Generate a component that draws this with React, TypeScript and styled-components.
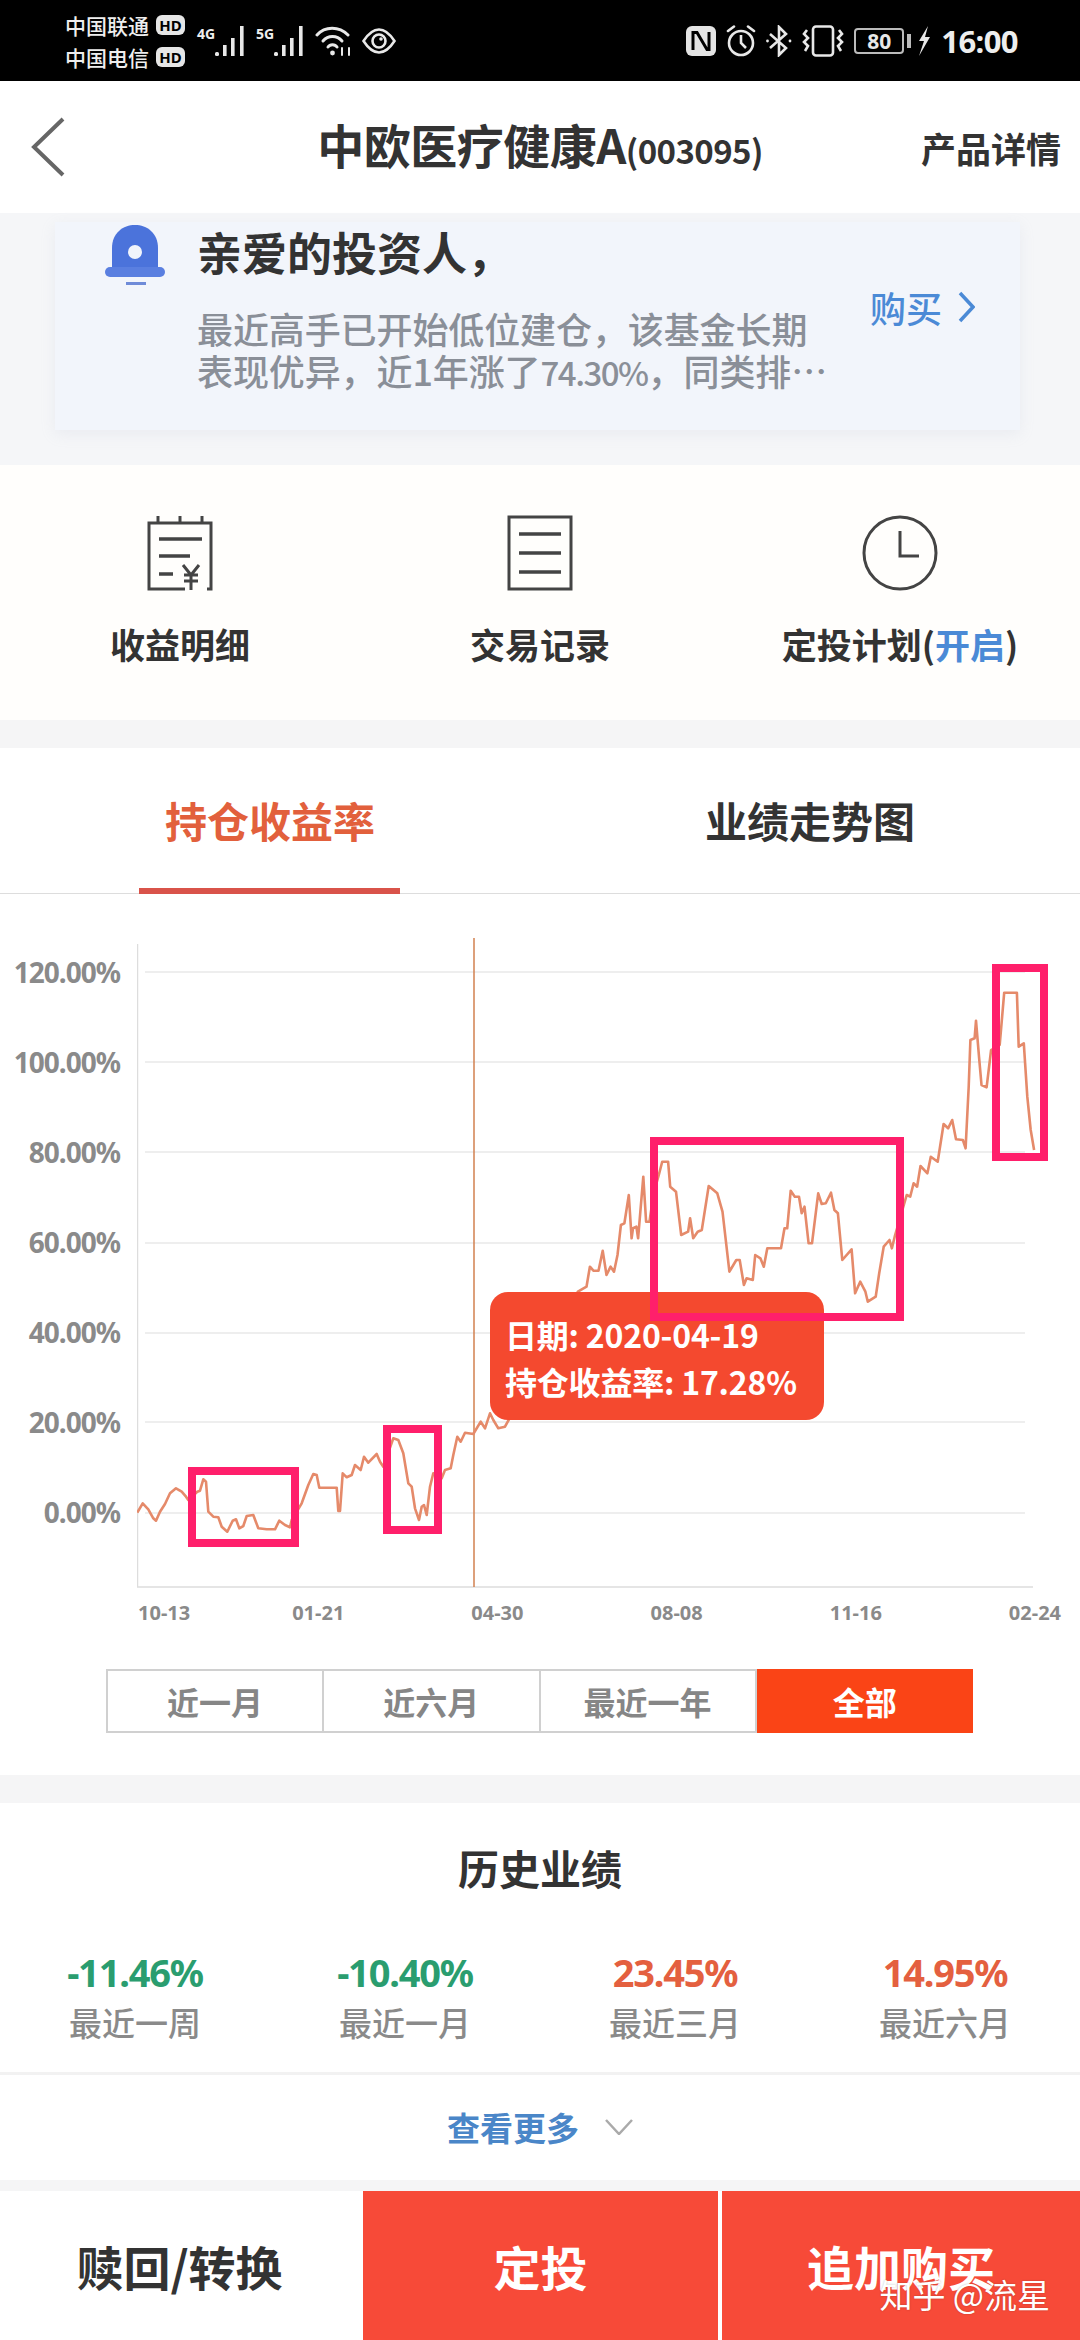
import React from "react";
import styled, { createGlobalStyle } from "styled-components";

const Global = createGlobalStyle`
  html, body { margin: 0; padding: 0; background: #fff; }
  body { font-family: "Noto Sans CJK SC", "Noto Sans", sans-serif; }
  * { box-sizing: border-box; }
`;

const Page = styled.div`
  width: 1080px;
  height: 2340px;
  overflow: hidden;
  display: flex;
  flex-direction: column;
  background: #fff;
  color: #333;
`;

/* ---------- status bar ---------- */
const StatusBar = styled.div`
  height: 81px;
  flex: none;
  background: #000;
  color: #eee;
  display: flex;
  align-items: center;
  justify-content: space-between;
  padding: 0 62px 0 65px;
`;
const StatusGroup = styled.div`
  display: flex;
  align-items: center;
  gap: ${(p: { $gap: number }) => p.$gap}px;
`;
const Carriers = styled.div`
  display: flex;
  flex-direction: column;
  gap: 8px;
  margin-right: 3px;
`;
const Carrier = styled.div`
  display: flex;
  align-items: center;
  gap: 7px;
  font-size: 21px;
  line-height: 24px;
  font-weight: 500;
`;
const HdBadge = styled.span`
  width: 29px;
  height: 20px;
  border-radius: 6px;
  background: #e6e6e6;
  color: #000;
  font: 700 15px/20px "Noto Sans", sans-serif;
  text-align: center;
`;
const Network = styled.div`
  display: flex;
  align-items: flex-end;
  height: 30px;
`;
const NetTag = styled.span`
  font: 700 14px/14px "Noto Sans", sans-serif;
  align-self: flex-start;
  margin-top: 1px;
  width: 18px;
`;
const BatteryBox = styled.div`
  width: 50px;
  height: 26px;
  border: 2px solid #bbb;
  border-radius: 4px;
  font: 700 21px/22px "Noto Sans", sans-serif;
  text-align: center;
  color: #e8e8e8;
`;
const BatteryCap = styled.div`
  width: 4px;
  height: 14px;
  background: #bbb;
  margin-left: 3px;
  margin-right: 6px;
`;
const Clock = styled.div`
  font: 700 31px/36px "Noto Sans", sans-serif;
  letter-spacing: -0.6px;
  margin-left: 0;
`;

const Signal = () => (
  <svg width="32" height="30" viewBox="0 0 32 30" fill="#e8e8e8">
    <rect x="0" y="26" width="4" height="4" rx="1.5" />
    <rect x="8" y="19" width="3.6" height="11" />
    <rect x="16" y="12" width="3.6" height="18" />
    <rect x="25" y="0" width="3.6" height="30" />
  </svg>
);
const Wifi = () => (
  <svg width="38" height="30" viewBox="0 0 38 30" fill="none" stroke="#e8e8e8" strokeWidth="3" strokeLinecap="round">
    <path d="M2 9 C10 0 24 0 33 9" />
    <path d="M8 15 C13 9 22 9 27 15" />
    <path d="M13 21 C15 18 20 18 22 21" />
    <circle cx="17.5" cy="27" r="2.4" fill="#e8e8e8" stroke="none" />
    <path d="M27 29 V22 M34 29 V22" strokeWidth="2" />
  </svg>
);
const Eye = () => (
  <svg width="34" height="26" viewBox="0 0 34 26" fill="none" stroke="#e8e8e8" strokeWidth="2.6">
    <path d="M1.5 13 C8 3 13 1.5 17 1.5 C21 1.5 26 3 32.5 13 C26 23 21 24.5 17 24.5 C13 24.5 8 23 1.5 13 Z" />
    <circle cx="17" cy="13" r="6.5" />
    <circle cx="19" cy="11" r="1.8" fill="#e8e8e8" stroke="none" />
  </svg>
);
const Nfc = () => (
  <svg width="30" height="30" viewBox="0 0 30 30">
    <rect x="0" y="0" width="30" height="30" rx="6" fill="#e4e4e4" />
    <path d="M7 24 V6.5 H11 L21 23.5 H23 V6" fill="none" stroke="#000" strokeWidth="3" />
  </svg>
);
const Alarm = () => (
  <svg width="30" height="32" viewBox="0 0 30 32" fill="none" stroke="#e8e8e8" strokeWidth="2.6">
    <circle cx="15" cy="18" r="12" />
    <path d="M15 10 V18 L20 23" />
    <path d="M2 6 L8 1.5 M28 6 L22 1.5" strokeLinecap="round" />
  </svg>
);
const Bluetooth = () => (
  <svg width="26" height="32" viewBox="0 0 26 32" fill="none" stroke="#e8e8e8" strokeWidth="2.6">
    <path d="M4 9 L20 23 L13 30 V2 L20 9 L4 23" />
    <circle cx="1.5" cy="16" r="1.4" fill="#e8e8e8" stroke="none" />
    <circle cx="24" cy="16" r="1.4" fill="#e8e8e8" stroke="none" />
  </svg>
);
const Vibrate = () => (
  <svg width="42" height="32" viewBox="0 0 42 32" fill="none" stroke="#e8e8e8" strokeWidth="2.6">
    <rect x="11" y="1.5" width="20" height="29" rx="3" />
    <path d="M5 5 L2 9 L6 13 L2 17 L6 21 L3 26" />
    <path d="M37 5 L40 9 L36 13 L40 17 L36 21 L39 26" />
  </svg>
);
const Bolt = () => (
  <svg width="14" height="30" viewBox="0 0 14 30" fill="#e8e8e8">
    <path d="M11 0 L2 15 H7 L2 30 L13 11 H8 Z" />
  </svg>
);

/* ---------- nav ---------- */
const Nav = styled.div`
  height: 132px;
  flex: none;
  display: grid;
  grid-template-columns: 1fr auto 1fr;
  align-items: center;
  background: #fff;
`;
const Back = styled.div`
  padding-left: 30px;
  display: flex;
`;
const Title = styled.div`
  font-size: 47px;
  line-height: 60px;
  font-weight: 700;
  color: #333;
  white-space: nowrap;
  display: flex;
  align-items: baseline;
  letter-spacing: -0.5px;
`;
const TitleCode = styled.span`
  font-size: 33px;
  letter-spacing: -0.6px;
`;
const NavLink = styled.div`
  justify-self: end;
  padding-right: 19px;
  font-size: 35px;
  font-weight: 700;
  color: #333;
`;

/* ---------- banner ---------- */
const Banner = styled.div`
  height: 252px;
  flex: none;
  background: #f5f6f8;
  padding: 9px 60px 35px 55px;
`;
const Card = styled.div`
  height: 208px;
  background: #f2f5fb;
  box-shadow: 0 4px 14px rgba(170, 178, 195, 0.14);
  display: flex;
  padding-left: 50px;
  padding-right: 45px;
`;
const BellBox = styled.div`
  width: 60px;
  margin-right: 32px;
  padding-top: 3px;
  flex: none;
`;
const CardText = styled.div`
  flex: 1;
  min-width: 0;
`;
const CardTitle = styled.div`
  font-size: 45px;
  line-height: 60px;
  font-weight: 700;
  color: #333;
`;
const CardDesc = styled.div`
  margin-top: 25px;
  font-size: 36px;
  line-height: 42px;
  font-weight: 500;
  color: #8a8f98;
  white-space: nowrap;
  letter-spacing: -0.1px;
`;
const TightNumber = styled.span`
  font-size: 33px;
  letter-spacing: -1.5px;
`;
const BuyLink = styled.div`
  flex: none;
  margin-top: 60px;
  height: 50px;
  display: flex;
  align-items: center;
  gap: 16px;
  font-size: 36px;
  font-weight: 500;
  color: #4b8ad6;
`;

/* ---------- actions ---------- */
const Actions = styled.div`
  height: 255px;
  flex: none;
  background: #fffefc;
  display: grid;
  grid-template-columns: repeat(3, 1fr);
  padding-top: 50px;
`;
const Action = styled.div`
  display: flex;
  flex-direction: column;
  align-items: center;
  gap: 28px;
`;
const ActionIcon = styled.div`
  height: 76px;
  display: flex;
`;
const ActionLabel = styled.div`
  font-size: 35px;
  line-height: 50px;
  font-weight: 700;
  color: #333;
  white-space: nowrap;
`;
const Blue = styled.span`
  color: #4b8ad6;
`;
const Gap = styled.div`
  height: ${(p: { $h: number }) => p.$h}px;
  flex: none;
  background: #f5f5f6;
`;

/* ---------- tabs ---------- */
const Tabs = styled.div`
  height: 146px;
  flex: none;
  display: grid;
  grid-template-columns: 1fr 1fr;
  border-bottom: 1px solid #ddd;
`;
const Tab = styled.div<{ $active?: boolean }>`
  position: relative;
  display: flex;
  align-items: center;
  justify-content: center;
  padding-bottom: 2px;
  font-size: 42px;
  font-weight: 700;
  color: ${(p) => (p.$active ? "#e2603c" : "#333")};
  ${(p) =>
    p.$active &&
    `&::after {
      content: "";
      position: absolute;
      left: 139px;
      bottom: -1px;
      width: 261px;
      height: 6px;
      background: #d9534a;
    }`}
`;

/* ---------- chart ---------- */
const ChartSection = styled.div`
  position: relative;
  height: 881px;
  flex: none;
  padding-top: 33px;
  background: #fff;
`;
const ChartRow = styled.div`
  display: flex;
  height: 663px;
`;
const YAxis = styled.div`
  width: 137px;
  flex: none;
  display: flex;
  flex-direction: column;
  padding-right: 17px;
`;
const YLabel = styled.div`
  height: 90px;
  flex: none;
  display: flex;
  align-items: center;
  justify-content: flex-end;
  font: 700 28px/1 "Noto Sans", sans-serif;
  letter-spacing: -1px;
  color: #8a8a8a;
`;
const Plot = styled.svg`
  flex: none;
  display: block;
`;
const XAxis = styled.div`
  height: 46px;
  display: flex;
  align-items: center;
  gap: 127px;
  padding-left: 138px;
`;
const XLabel = styled.div<{ $first?: boolean }>`
  font: 700 20px/1 "Noto Sans", sans-serif;
  color: #8a8a8a;
  margin-right: ${(p) => (p.$first ? "-25px" : "0")};
`;
const Segments = styled.div`
  margin: 33px 0 0 106px;
  width: 867px;
  height: 64px;
  display: grid;
  grid-template-columns: repeat(4, 1fr);
  border-top: 2px solid #d0d0d0;
  border-bottom: 2px solid #d0d0d0;
  border-left: 2px solid #d0d0d0;
`;
const Segment = styled.div<{ $active?: boolean }>`
  display: flex;
  align-items: center;
  justify-content: center;
  font-size: 32px;
  font-weight: 700;
  color: ${(p) => (p.$active ? "#fff" : "#868686")};
  background: ${(p) => (p.$active ? "#fa4416" : "transparent")};
  border-right: ${(p) => (p.$active ? "0" : "2px solid #d0d0d0")};
  margin: ${(p) => (p.$active ? "-2px 0" : "0")};
`;
const Tooltip = styled.div`
  position: absolute;
  left: 490px;
  top: 398px;
  width: 334px;
  height: 128px;
  border-radius: 18px;
  background: #f4492f;
  color: #fff;
  padding: 19px 0 0 15px;
  font-size: 32px;
  line-height: 47px;
  font-weight: 700;
  white-space: nowrap;
  letter-spacing: -0.2px;
`;
const Highlight = styled.div<{ $x: number; $y: number; $w: number; $h: number }>`
  position: absolute;
  left: ${(p) => p.$x}px;
  top: ${(p) => p.$y}px;
  width: ${(p) => p.$w}px;
  height: ${(p) => p.$h}px;
  border: 8px solid #ff1f6b;
`;

/* ---------- history ---------- */
const History = styled.div`
  height: 272px;
  flex: none;
  border-bottom: 3px solid #f2f2f2;
  padding-top: 32px;
`;
const HistoryTitle = styled.div`
  text-align: center;
  font-size: 41px;
  line-height: 64px;
  font-weight: 700;
  color: #333;
`;
const Stats = styled.div`
  margin-top: 48px;
  display: grid;
  grid-template-columns: repeat(4, 270px);
`;
const Stat = styled.div`
  display: flex;
  flex-direction: column;
  align-items: center;
  gap: 3px;
`;
const StatValue = styled.div<{ $up?: boolean }>`
  font: 700 38px/50px "Noto Sans", sans-serif;
  letter-spacing: -1.2px;
  color: ${(p) => (p.$up ? "#e4603f" : "#2a9d6f")};
`;
const StatLabel = styled.div`
  font-size: 33px;
  line-height: 44px;
  font-weight: 500;
  color: #8a8a8a;
`;
const More = styled.div`
  height: 105px;
  flex: none;
  display: flex;
  align-items: center;
  justify-content: center;
  gap: 26px;
  padding-bottom: 2px;
  font-size: 33px;
  font-weight: 700;
  color: #4a86c8;
`;

/* ---------- bottom ---------- */
const Bottom = styled.div`
  position: relative;
  height: 149px;
  flex: none;
  display: grid;
  grid-template-columns: 359px 355px 358px;
  column-gap: 4px;
  background: #fff;
`;
const BottomBtn = styled.div<{ $primary?: boolean }>`
  display: flex;
  align-items: center;
  justify-content: center;
  font-size: 47px;
  font-weight: 700;
  background: ${(p) => (p.$primary ? "#f74a38" : "#fff")};
  color: ${(p) => (p.$primary ? "#fff" : "#333")};
`;
const Watermark = styled.div`
  position: absolute;
  right: 30px;
  bottom: 21px;
  font-size: 33px;
  line-height: 50px;
  color: #fff;
  text-shadow: 0 0 2px rgba(0, 0, 0, 0.25);
  white-space: nowrap;
`;

/* ---------- data ---------- */
const A: number[][] = [
  [52,698],[68,670],[85,688],[100,715],[108,722],[120,695],[135,672],[150,640],[168,625],[185,635],[198,650],[205,660],[232,635],[240,632],[250,598],[258,605],[265,695],[280,710],[295,712],[305,740],[322,755],[338,722],[348,718],[358,745],[370,738],[380,708],[400,705],[415,745],[440,748],[465,748],[478,722],[495,735],[510,742],[515,720],[545,670],[565,615],[580,582],[590,585],[598,623],[650,623],[655,693],[660,693],[668,580],[680,592],[695,585],[705,555],[722,570],[732,530],[745,548],[770,522],[780,545],[790,560],[820,475],[835,480],[850,520],[865,610],[875,620],[885,685],[897,720],[905,680],[912,675],[920,705],[930,620],[940,580],[965,595],[975,570],[992,565],[1000,525],[1012,470],[1022,485],[1035,458],[1060,462],[1082,425],[1095,445],[1110,400],[1120,420],[1135,445],[1155,440],
];
const B: number[][] = [
  [110,1085],[135,1070],[145,1010],[155,1022],[170,1022],[182,962],[193,1035],[205,1010],[215,1025],[225,975],[235,885],[245,880],[258,795],[266,925],[270,895],[280,890],[285,925],[300,740],[308,875],[318,875],[330,790],[345,735],[355,695],[372,695],[378,770],[395,785],[410,915],[430,905],[436,865],[445,925],[458,905],[470,900],[490,768],[515,790],[530,845],[550,1025],[570,990],[580,990],[592,1065],[600,1045],[618,1050],[625,975],[640,985],[650,1010],[660,955],[700,955],[710,895],[718,895],[728,782],[740,800],[752,800],[760,850],[768,830],[780,940],[790,940],[808,790],[818,822],[830,820],[845,788],[855,840],[865,850],[878,990],[905,958],[915,1090],[930,1055],[945,1085],[952,1115],[975,1100],[985,1030],[998,950],[1015,930],[1022,955],[1030,920],[1065,795],[1075,800],[1085,760],[1095,770],[1105,708],[1125,730],[1135,680],[1155,695],[1172,582],[1185,595],[1197,570],[1208,628],[1228,630],[1236,655],[1245,470],[1250,330],[1262,325],[1266,272],[1275,380],[1282,465],[1297,472],[1310,360],[1335,345],[1348,188],[1385,188],[1390,350],[1405,340],[1415,500],[1425,600],[1435,660],
];
const ORIGIN_X = 137;
const ORIGIN_Y = 927;
const linePoints = [
  ...A.map(([x, y]) => [120 + x / 3 - ORIGIN_X, 1280 + y / 3 - ORIGIN_Y]),
  ...B.map(([x, y]) => [540 + x / 2.904 - ORIGIN_X, 930 + y / 3 - ORIGIN_Y]),
]
  .map(([x, y]) => `${x.toFixed(1)},${y.toFixed(1)}`)
  .join(" ");

const yLabels = ["120.00%", "100.00%", "80.00%", "60.00%", "40.00%", "20.00%", "0.00%"];
const gridYs = [972, 1062, 1152, 1243, 1333, 1422, 1513];
const xLabels = ["10-13", "01-21", "04-30", "08-08", "11-16", "02-24"];
const stats = [
  { value: "-11.46%", label: "最近一周", up: false },
  { value: "-10.40%", label: "最近一月", up: false },
  { value: "23.45%", label: "最近三月", up: true },
  { value: "14.95%", label: "最近六月", up: true },
];
const boxes = [
  { x: 188, y: 1467, w: 111, h: 80 },
  { x: 383, y: 1425, w: 59, h: 109 },
  { x: 650, y: 1137, w: 254, h: 184 },
  { x: 992, y: 964, w: 56, h: 197 },
];

const iconStroke = { fill: "none", stroke: "#444", strokeWidth: 3 };

export default function App() {
  return (
    <Page>
      <Global />
      <StatusBar>
        <StatusGroup $gap={9}>
          <Carriers>
            <Carrier>中国联通<HdBadge>HD</HdBadge></Carrier>
            <Carrier>中国电信<HdBadge>HD</HdBadge></Carrier>
          </Carriers>
          <Network><NetTag>4G</NetTag><Signal /></Network>
          <Network><NetTag>5G</NetTag><Signal /></Network>
          <Wifi />
          <Eye />
        </StatusGroup>
        <StatusGroup $gap={10}>
          <Nfc />
          <Alarm />
          <Bluetooth />
          <Vibrate />
          <StatusGroup $gap={0}>
            <BatteryBox>80</BatteryBox>
            <BatteryCap />
            <Bolt />
          </StatusGroup>
          <Clock>16:00</Clock>
        </StatusGroup>
      </StatusBar>

      <Nav>
        <Back>
          <svg width="36" height="60" viewBox="0 0 36 60" fill="none" stroke="#666" strokeWidth="4">
            <path d="M33 2 L4 30 L33 58" />
          </svg>
        </Back>
        <Title>中欧医疗健康A<TitleCode>(003095)</TitleCode></Title>
        <NavLink>产品详情</NavLink>
      </Nav>

      <Banner>
        <Card>
          <BellBox>
            <svg width="60" height="60" viewBox="0 0 60 60">
              <path d="M7 43 V23 C7 8 18 0 30 0 C42 0 53 8 53 23 V43 Z" fill="#4b73db" />
              <rect x="0" y="42" width="60" height="10" rx="5" fill="#5a7fe0" />
              <rect x="21" y="57" width="20" height="3" fill="#6f8bd8" />
              <circle cx="30" cy="27" r="7" fill="#f1f4fb" />
            </svg>
          </BellBox>
          <CardText>
            <CardTitle>亲爱的投资人，</CardTitle>
            <CardDesc>
              最近高手已开始低位建仓，该基金长期
              <br />
              表现优异，近1年涨了<TightNumber>74.30%</TightNumber>，同类排…
            </CardDesc>
          </CardText>
          <BuyLink>
            购买
            <svg width="17" height="32" viewBox="0 0 17 32" fill="none" stroke="#4b8ad6" strokeWidth="3.5">
              <path d="M2 2 L15 16 L2 30" />
            </svg>
          </BuyLink>
        </Card>
      </Banner>

      <Actions>
        <Action>
          <ActionIcon>
            <svg width="66" height="76" viewBox="0 0 66 76" {...iconStroke}>
              <path d="M38 74 H2 V8 H64 V74 H60" />
              <path d="M11 1 V8 M33 1 V8 M55 1 V8" />
              <path d="M12 24 H55 M12 41 H43 M12 59 H26" strokeWidth="3.5" />
              <path d="M36 50 L44 60 L52 50 M37 60 H51 M37 66 H51 M44 60 V75" strokeWidth="3" />
            </svg>
          </ActionIcon>
          <ActionLabel>收益明细</ActionLabel>
        </Action>
        <Action>
          <ActionIcon>
            <svg width="66" height="76" viewBox="0 0 66 76" {...iconStroke}>
              <rect x="2" y="2" width="62" height="72" />
              <path d="M12 19 H54 M12 38 H54 M12 57 H54" strokeWidth="3.5" />
            </svg>
          </ActionIcon>
          <ActionLabel>交易记录</ActionLabel>
        </Action>
        <Action>
          <ActionIcon>
            <svg width="76" height="76" viewBox="0 0 76 76" {...iconStroke}>
              <circle cx="38" cy="38" r="36" />
              <path d="M38 16 V41 H57" />
            </svg>
          </ActionIcon>
          <ActionLabel>定投计划(<Blue>开启</Blue>)</ActionLabel>
        </Action>
      </Actions>
      <Gap $h={28} />

      <Tabs>
        <Tab $active>持仓收益率</Tab>
        <Tab>业绩走势图</Tab>
      </Tabs>

      <ChartSection>
        <ChartRow>
          <YAxis>
            {yLabels.map((l) => (
              <YLabel key={l}>{l}</YLabel>
            ))}
          </YAxis>
          <Plot width="943" height="663" viewBox="0 0 943 663">
            <path d="M0.5 17 V660" stroke="#ddd" strokeWidth="1.5" fill="none" />
            <path d="M0 660 H896" stroke="#ddd" strokeWidth="1.5" fill="none" />
            {gridYs.map((y) => (
              <path key={y} d={`M8 ${y - ORIGIN_Y} H888`} stroke="#eeeeee" strokeWidth="2" fill="none" />
            ))}
            <path d="M337 11 V660" stroke="#d2804f" strokeWidth="1.5" fill="none" />
            <polyline points={linePoints} fill="none" stroke="#e58a6a" strokeWidth="2.6" strokeLinejoin="round" />
          </Plot>
        </ChartRow>
        <XAxis>
          {xLabels.map((l, i) => (
            <XLabel key={l} $first={i === 0}>{l}</XLabel>
          ))}
        </XAxis>
        <Segments>
          <Segment>近一月</Segment>
          <Segment>近六月</Segment>
          <Segment>最近一年</Segment>
          <Segment $active>全部</Segment>
        </Segments>
        <Tooltip>
          日期: 2020-04-19
          <br />
          持仓收益率: 17.28%
        </Tooltip>
        {boxes.map((b) => (
          <Highlight key={b.x} $x={b.x} $y={b.y - 894} $w={b.w} $h={b.h} />
        ))}
      </ChartSection>
      <Gap $h={28} />

      <History>
        <HistoryTitle>历史业绩</HistoryTitle>
        <Stats>
          {stats.map((s) => (
            <Stat key={s.label}>
              <StatValue $up={s.up}>{s.value}</StatValue>
              <StatLabel>{s.label}</StatLabel>
            </Stat>
          ))}
        </Stats>
      </History>
      <More>
        查看更多
        <svg width="28" height="16" viewBox="0 0 28 16" fill="none" stroke="#aaa" strokeWidth="2.5">
          <path d="M1 1 L14 15 L27 1" />
        </svg>
      </More>
      <Gap $h={11} />

      <Bottom>
        <BottomBtn>赎回/转换</BottomBtn>
        <BottomBtn $primary>定投</BottomBtn>
        <BottomBtn $primary>追加购买</BottomBtn>
        <Watermark>知乎 @流星</Watermark>
      </Bottom>
    </Page>
  );
}
